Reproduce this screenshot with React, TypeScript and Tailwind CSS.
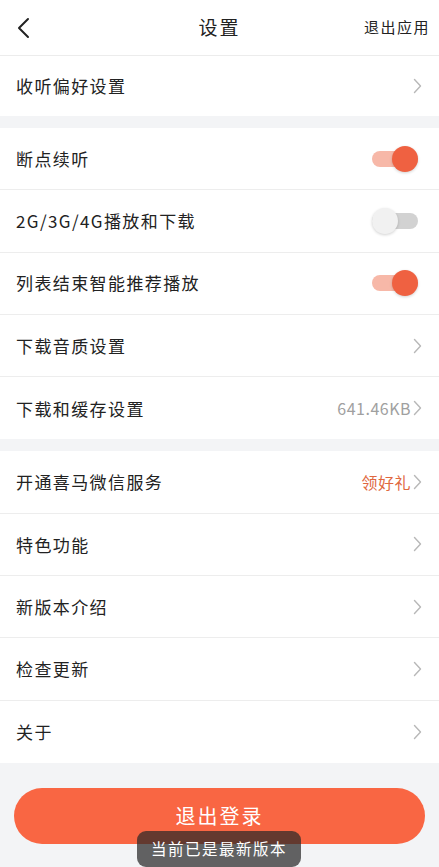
import React from "react";

const font = { fontFamily: '"Noto Sans CJK SC", "Noto Sans", sans-serif' };

function Chevron() {
  return (
    <svg width="9" height="16" viewBox="0 0 9 16" className="shrink-0">
      <path d="M1.5 1.5 L7.5 8 L1.5 14.5" fill="none" stroke="#b8b8b8" strokeWidth="1.4" strokeLinecap="round" strokeLinejoin="round" />
    </svg>
  );
}

function Toggle({ on }: { on: boolean }) {
  return (
    <div className="relative w-[46px] h-[26px] flex items-center shrink-0">
      <div className={`w-full h-[16px] rounded-full ${on ? "bg-[#f7b8a8]" : "bg-[#d2d2d2]"}`} />
      <div
        className={`absolute top-0 w-[26px] h-[26px] rounded-full shadow-[0_1px_3px_rgba(0,0,0,0.18)] ${
          on ? "right-0 bg-[#ef6141]" : "left-0 bg-[#f1f1f1]"
        }`}
      />
    </div>
  );
}

type Row = { label: string; kind: "chev" | "on" | "off"; value?: string; valueColor?: string };

function Item({ row, last, h = "h-[62.3px]" }: { row: Row; last?: boolean; h?: string }) {
  return (
    <div className={`${h} flex items-center justify-between pl-4 pr-[17px] ${last ? "" : "border-b border-[#ededed]"}`}>
      <span className="text-[17px] tracking-[1.4px] text-[#222]">{row.label}</span>
      {row.kind === "chev" ? (
        <div className="flex items-center gap-[2px]">
          {row.value && (
            <span className={`text-[16px] tracking-[0.5px] ${row.valueColor ?? "text-[#a0a0a0]"}`}>{row.value}</span>
          )}
          <Chevron />
        </div>
      ) : (
        <div className="mr-[4px]">
          <Toggle on={row.kind === "on"} />
        </div>
      )}
    </div>
  );
}

export default function App() {
  const sec2: Row[] = [
    { label: "断点续听", kind: "on" },
    { label: "2G/3G/4G播放和下载", kind: "off" },
    { label: "列表结束智能推荐播放", kind: "on" },
    { label: "下载音质设置", kind: "chev" },
    { label: "下载和缓存设置", kind: "chev", value: "641.46KB" },
  ];
  const sec3: Row[] = [
    { label: "开通喜马微信服务", kind: "chev", value: "领好礼", valueColor: "text-[#e0683f]" },
    { label: "特色功能", kind: "chev" },
    { label: "新版本介绍", kind: "chev" },
    { label: "检查更新", kind: "chev" },
    { label: "关于", kind: "chev" },
  ];
  return (
    <div style={font} className="relative w-[439px] h-[867px] overflow-hidden bg-[#f3f4f6]">
      <div className="bg-white h-[56px] border-b border-[#ececec] flex items-center justify-between pl-[16px] pr-[9px] relative">
        <svg width="16" height="22" viewBox="0 0 16 22">
          <path d="M12 2 L3 11 L12 20" fill="none" stroke="#222" strokeWidth="2" strokeLinecap="round" strokeLinejoin="round" />
        </svg>
        <span className="absolute left-0 right-0 text-center text-[19px] tracking-[2px] text-[#222] pointer-events-none">设置</span>
        <span className="text-[15px] tracking-[1.5px] text-[#222]">退出应用</span>
      </div>
      <div className="bg-white">
        <Item row={{ label: "收听偏好设置", kind: "chev" }} last h="h-[60px]" />
      </div>
      <div className="h-[12px]" />
      <div className="bg-white">
        {sec2.map((r, i) => (
          <Item key={r.label} row={r} last={i === sec2.length - 1} />
        ))}
      </div>
      <div className="h-[12px]" />
      <div className="bg-white">
        {sec3.map((r, i) => (
          <Item key={r.label} row={r} last={i === sec3.length - 1} />
        ))}
      </div>
      <div className="px-[14px] pt-[25px]">
        <div className="h-[56px] rounded-full bg-[#f96643] flex items-center justify-center">
          <span className="text-white text-[20px] tracking-[2px]">退出登录</span>
        </div>
      </div>
      <div className="absolute left-[137px] top-[831px] w-[164px] h-[36px] rounded-[9px] bg-[rgba(40,40,40,0.72)] flex items-center justify-center">
        <span className="text-white text-[15.5px] tracking-[1.5px]">当前已是最新版本</span>
      </div>
    </div>
  );
}
